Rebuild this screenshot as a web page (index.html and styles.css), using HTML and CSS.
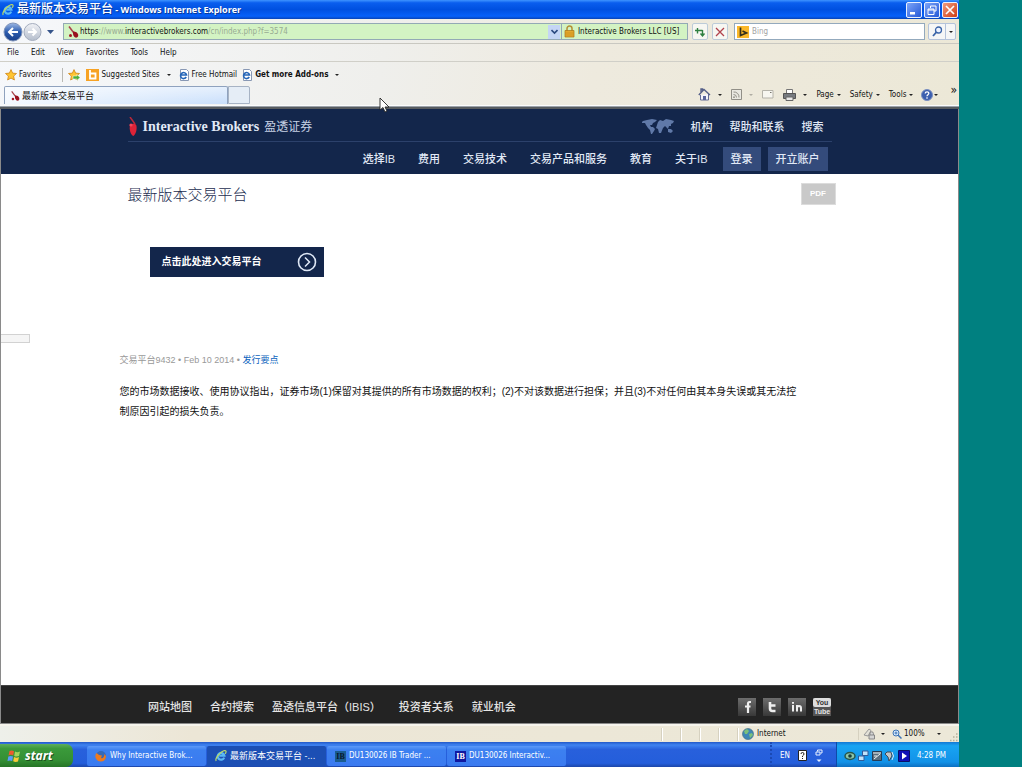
FILE: index.html
```html
<!DOCTYPE html>
<html lang="zh-CN">
<head>
<meta charset="utf-8">
<title>最新版本交易平台</title>
<link rel="stylesheet" href="styles.css">
</head>
<body>
<svg class="defs" aria-hidden="true">
  <defs>
    <linearGradient id="blueBall" x1="0" y1="0" x2="0" y2="1"><stop offset="0" stop-color="#9db9e6"/><stop offset=".5" stop-color="#2c5cae"/><stop offset="1" stop-color="#1a3f88"/></linearGradient>
    <linearGradient id="greyBall" x1="0" y1="0" x2="0" y2="1"><stop offset="0" stop-color="#f0f2f6"/><stop offset="1" stop-color="#b4bdcc"/></linearGradient>
    <linearGradient id="social" x1="0" y1="0" x2="0" y2="1"><stop offset="0" stop-color="#6d6d6d"/><stop offset="1" stop-color="#383838"/></linearGradient>
    <symbol id="ie" viewBox="0 0 12 12"><path d="M9.200 7.600A3.400 3.400 0 1 1 9.400 5.600H4.200" fill="none" stroke="#5ab8f4" stroke-width="2.200"/><path d="M1.200 11C-.6 8.200 7.500-.8 10.600.8c1 .8.2 2.200-.4 3" fill="none" stroke="#b9d86a" stroke-width="1.200"/></symbol>
    <symbol id="iepage" viewBox="0 0 12 12"><path d="M2.500 .5h6l2 2v9h-8z" fill="#fff" stroke="#8898b4"/><path d="M8.200 8A3 3 0 1 1 8.500 6H3" fill="none" stroke="#2465b8" stroke-width="1.600"/></symbol>
    <symbol id="ibmark" viewBox="0 0 12 12"><path d="M2 .5l4.500 6" stroke="#a8434a" stroke-width="1.500"/><path d="M6 5.500q4-.5 5 2.500t-2 3.800Q5.500 11 6 5.500z" fill="#99121f"/><circle cx="3.500" cy="9.500" r="1.500" fill="#a31824"/></symbol>
    <symbol id="star" viewBox="0 0 12 12"><path d="M6 .6l1.600 3.500 3.900.4-2.900 2.600.8 3.900L6 9.100 2.600 11l.8-3.900L.5 4.500l3.900-.4z" fill="#ffc531" stroke="#cf8416" stroke-width=".8"/></symbol>
  </defs>
</svg>
<div class="desktop">
  <div class="window">
    <header class="titlebar">
      <svg class="i12"><use href="#ie"/></svg>
      <h1><span class="cjk">最新版本交易平台</span> - Windows Internet Explorer</h1>
      <div class="winbtns">
        <button aria-label="Minimize"><svg viewBox="0 0 14 14"><path d="M3 9h5v2.500H3z" fill="#fff"/></svg></button>
        <button aria-label="Restore"><svg viewBox="0 0 14 14"><path d="M5.500 5V3h5.500v5H9M3 6h6v5.500H3zM3 7h6" fill="none" stroke="#fff"/></svg></button>
        <button class="close" aria-label="Close"><svg viewBox="0 0 14 14"><path d="M3 3l8 8m0-8l-8 8" stroke="#fff" stroke-width="1.700"/></svg></button>
      </div>
    </header>

    <div class="chrome">
      <div class="addressrow">
        <button class="plain" aria-label="Back"><svg width="20" height="20" viewBox="0 0 20 20"><circle cx="10" cy="10" r="9" fill="url(#blueBall)" stroke="#7f93b8"/><path d="M15 10H6m4-4l-4 4 4 4" fill="none" stroke="#fff" stroke-width="2"/></svg></button>
        <button class="plain" aria-label="Forward"><svg width="19" height="20" viewBox="0 0 19 20"><circle cx="9.500" cy="10" r="8.500" fill="url(#greyBall)" stroke="#a3acbd"/><path d="M5 10h8M9.500 6.500L13 10l-3.500 3.500" fill="none" stroke="#fff" stroke-width="2"/></svg></button>
        <button class="plain recent" aria-label="Recent pages"><svg width="8" height="6" viewBox="0 0 8 6"><path d="M0 1h7L3.500 5z" fill="#35548a"/></svg></button>
        <div class="address">
          <svg class="i12"><use href="#ibmark"/></svg>
          <div class="url" role="textbox" aria-label="Address"><b>https</b>://www.<b>interactivebrokers.com</b>/cn/index.php?f=3574</div>
          <button class="drop" aria-label="Show addresses"><svg width="7" height="6" viewBox="0 0 7 6"><path d="M.5 1l3 3 3-3" fill="none" stroke="#2c4a80" stroke-width="1.600"/></svg></button>
          <div class="security"><svg width="11" height="13" viewBox="0 0 11 13"><path d="M3 6V3.500a2.500 2.500 0 0 1 5 0V6" fill="none" stroke="#b39036" stroke-width="1.500"/><path d="M1 5.500h9V12H1z" fill="#e3a92c" stroke="#a97412" stroke-width=".7"/><path d="M1 8h9M1 10h9" stroke="#c98c1b" stroke-width=".7"/></svg>Interactive Brokers LLC [US]</div>
        </div>
        <button class="tool" aria-label="Refresh"><svg width="12" height="12" viewBox="0 0 12 12"><path d="M3.500 7.500V2M1 4.500h4.500M8.500 4v6M6.500 7.500l2 2.500 2-2.500M5.500 4.500h3" fill="none" stroke="#2f8042" stroke-width="1.400"/></svg></button>
        <button class="tool" aria-label="Stop"><svg width="10" height="10" viewBox="0 0 10 10"><path d="M1 1l8 8m0-8L1 9" stroke="#b2434c" stroke-width="1.300"/></svg></button>
        <label class="search"><svg width="12" height="12" viewBox="0 0 12 12"><path d="M0 0h12v12H0z" fill="#fbb829"/><path d="M3.500 1.500v8l6-2.500-4-2" fill="none" stroke="#35301c" stroke-width="1.700"/></svg><input type="text" placeholder="Bing" aria-label="Bing search"></label>
        <div class="go"><button aria-label="Search"><svg width="11" height="11" viewBox="0 0 11 11"><circle cx="6.500" cy="4" r="3" fill="#eef4ff" stroke="#3a64a8" stroke-width="1.300"/><path d="M4.500 6L1 10" stroke="#3a64a8" stroke-width="1.800"/></svg></button><button class="more" aria-label="Search options"><i class="arrow"></i></button></div>
      </div>

      <nav class="menubar"><button>File</button><button>Edit</button><button>View</button><button>Favorites</button><button>Tools</button><button>Help</button></nav>

      <div class="favbar">
        <button class="favs"><svg class="i12"><use href="#star"/></svg>Favorites</button>
        <button aria-label="Add to favorites"><svg width="12" height="12" viewBox="0 0 12 12"><use href="#star"/><path d="M5 7h4V5.500L12 8.500 9 11.500V10H5z" fill="#4fae38" stroke="#fff" stroke-width=".5"/></svg></button>
        <button class="suggested"><svg width="13" height="12" viewBox="0 0 13 12"><path d="M0 0h13v12H0z" fill="#f7a223"/><path d="M4 1v8.500h5.500v-5H4" fill="none" stroke="#fff" stroke-width="1.800"/></svg>Suggested Sites <i class="arrow"></i></button>
        <button class="hotmail"><svg class="i12"><use href="#iepage"/></svg>Free Hotmail</button>
        <button class="strong"><svg class="i12"><use href="#iepage"/></svg>Get more Add-ons <i class="arrow"></i></button>
      </div>

      <div class="tabrow">
        <button class="tab"><svg class="i10"><use href="#ibmark"/></svg>最新版本交易平台</button>
        <button class="newtab" aria-label="New tab"></button>
        <div class="commands">
          <button class="wide" aria-label="Home"><svg width="13" height="13" viewBox="0 0 13 13"><path d="M2.500 7v5h8V6" fill="#f3f3fb" stroke="#626b94"/><path d="M.8 7L6 1.500 12 7M3 4V1h1.500v1.500" fill="none" stroke="#555f88" stroke-width="1.400"/><path d="M5 8h3v4H5z" fill="#59649a"/></svg><i class="arrow"></i></button>
          <button class="wide dim" aria-label="Feeds"><svg width="11" height="11" viewBox="0 0 11 11"><path d="M.5.500h10v10H.5z" fill="#e9e8e1" stroke="#918f87"/><path d="M2.500 3a5 5 0 0 1 5.500 5.500M2.500 5.500a3 3 0 0 1 3 3" fill="none" stroke="#918f87"/><circle cx="3" cy="8.200" r=".9" fill="#918f87"/></svg><i class="arrow"></i></button>
          <button aria-label="Read mail"><svg width="12" height="9" viewBox="0 0 12 9"><path d="M.5.500h10.500v7.500H.5z" fill="#f7f6f0" stroke="#b5b3aa"/><path d="M8 2.500h1.500" stroke="#77756e"/></svg></button>
          <button class="wide" aria-label="Print"><svg width="13" height="12" viewBox="0 0 13 12"><path d="M3.500 4V.5h6V4" fill="#fff" stroke="#777"/><path d="M.5 4.500h12v5H.5z" fill="#777b80" stroke="#555"/><path d="M3 8h7v3.500H3z" fill="#e9e9e9" stroke="#666"/></svg><i class="arrow"></i></button>
          <button>Page <i class="arrow"></i></button>
          <button>Safety <i class="arrow"></i></button>
          <button>Tools <i class="arrow"></i></button>
          <button class="help" aria-label="Help"><svg width="12" height="12" viewBox="0 0 12 12"><circle cx="6" cy="6" r="5.500" fill="#3c5fae" stroke="#7b8fc0"/><path d="M4.200 4.500C4.300 2.300 8 2.500 7.800 4.500 7.700 5.700 6 5.700 6 7.200M6 8.300v1.400" fill="none" stroke="#fff" stroke-width="1.300"/></svg><i class="arrow"></i></button>
        </div>
        <button class="chev" aria-label="More commands">»</button>
      </div>
    </div>

    <main class="page">
      <div class="masthead">
        <div class="wrap">
          <div class="brandrow">
            <a class="brand" href="#"><svg width="10" height="20" viewBox="0 0 10 20"><path d="M2 0l5 7" stroke="#b9283a" stroke-width="1.500"/><path d="M2 8.500C4 6 8 6 8.500 9c.5 3-.5 8-3 10C2.500 18 1 12 2 8.500z" fill="#dd2338"/><circle cx="3" cy="8" r="1.600" fill="#f0485a"/></svg><span class="name">Interactive Brokers</span><span class="cn">盈透证券</span></a>
            <nav class="toplinks">
              <a href="#" aria-label="Region"><svg width="32" height="16" viewBox="0 0 32 16"><path d="M1 2l4-1 5-1 5 1-2 2-2 1-1 2-2 0 1 2 2 0 2 2-1 2-2 3-1 0-1-4-2-2-2-3-1-2-4 0zM16 3l2-2 3 1 3-2 5 1 3 1-1 2-2 1 0 2-2 0-1 3-2-2-1-1-2 2-2 5-2 0-1-4-2-1 1-3zM26 10l3 0 2 2-2 2-3-1z" fill="#6079a8"/></svg></a>
              <a href="#">机构</a><a href="#">帮助和联系</a><a href="#">搜索</a>
            </nav>
          </div>
          <nav class="mainlinks">
            <a href="#">选择IB</a><a href="#">费用</a><a href="#">交易技术</a><a href="#">交易产品和服务</a><a href="#">教育</a><a href="#">关于IB</a>
            <span class="account"><a href="#">登录</a><a href="#">开立账户</a></span>
          </nav>
        </div>
      </div>

      <div class="content">
        <div class="titlerow"><h2>最新版本交易平台</h2><button class="pdf">PDF</button></div>
        <a class="launch" href="#">点击此处进入交易平台<svg width="20" height="20" viewBox="0 0 20 20"><circle cx="10" cy="10" r="8.500" fill="none" stroke="#dfe8f6" stroke-width="1.600"/><path d="M8 5.500l4.500 4.500L8 14.500" fill="none" stroke="#dfe8f6" stroke-width="1.500"/></svg></a>
        <p class="meta">交易平台9432 • Feb 10 2014 • <a href="#">发行要点</a></p>
        <p class="notice">您的市场数据接收、使用协议指出，证券市场(1)保留对其提供的所有市场数据的权利；(2)不对该数据进行担保；并且(3)不对任何由其本身失误或其无法控<br>制原因引起的损失负责。</p>
      </div>
      <div class="sidetab"></div>

      <footer class="foot">
        <nav><a href="#">网站地图</a><a href="#">合约搜索</a><a href="#">盈透信息平台（IBIS）</a><a href="#">投资者关系</a><a href="#">就业机会</a></nav>
        <div class="social">
          <a href="#" aria-label="Facebook"><svg viewBox="0 0 18 18"><path d="M0 0h18v18H0z" fill="url(#social)"/><path d="M13 4h-1.500Q10 4 10 6v9M7 8.500h5.500" fill="none" stroke="#eee" stroke-width="2.200"/></svg></a>
          <a href="#" aria-label="Twitter"><svg viewBox="0 0 18 18"><path d="M0 0h18v18H0z" fill="url(#social)"/><path d="M7 4v6.500Q7 13 9.500 13h3M7 7.500h5.500" fill="none" stroke="#eee" stroke-width="2.600"/></svg></a>
          <a href="#" aria-label="LinkedIn"><svg viewBox="0 0 18 18"><path d="M0 0h18v18H0z" fill="url(#social)"/><path d="M5 7v6.500M5 4v1.700M9 13.500V7M9 10Q9 8 11 8t2 2v3.500" fill="none" stroke="#eee" stroke-width="2"/></svg></a>
          <a class="yt" href="#"><span>You</span><span>Tube</span></a>
        </div>
      </footer>
    </main>

    <div class="status">
      <span class="cells"><i></i><i></i><i></i><i></i><i></i></span>
      <span class="zone"><svg width="12" height="12" viewBox="0 0 12 12"><circle cx="6" cy="6" r="5.500" fill="#3d86b5" stroke="#4a7286" stroke-width=".7"/><path d="M2 3l3-2 2 2-2 3-2 0zM7 6l3-1 1 2-3 3z" fill="#7cc07a"/></svg>Internet</span>
      <button class="protect" aria-label="Protected mode"><svg width="13" height="12" viewBox="0 0 13 12"><path d="M1 7L6 1l2 1.500L5 8z" fill="#e3e1d8" stroke="#999"/><path d="M6 7h5.500v4H6zM7 7V5.500a1.700 1.700 0 0 1 3.400 0V7" fill="#d5d5d5" stroke="#888"/></svg><i class="arrow"></i></button>
      <button class="zoom"><svg width="10" height="10" viewBox="0 0 10 10"><circle cx="4" cy="4" r="3" fill="#d9ecff" stroke="#3e74b5"/><path d="M4 2.500v3M2.500 4h3" stroke="#3e74b5"/><path d="M6 6l3.500 3.500" stroke="#3e74b5" stroke-width="1.500"/></svg>100% <i class="arrow"></i></button>
      <svg class="grip" width="9" height="9" viewBox="0 0 9 9"><path d="M7 1h1.500M4 4h1.500M7 4h1.500M1 7.500h1.500M4 7.500h1.500M7 7.500h1.500" stroke="#b5b09a" stroke-width="1.500"/></svg>
    </div>

    <div class="taskbar">
      <button class="start"><svg width="14" height="14" viewBox="0 0 14 14"><path d="M2.500 2Q5 .8 7 2.200L6.200 6.500Q4 5.300 1.500 6.400z" fill="#ee5a2e"/><path d="M8 2.600q2.300 1.200 5 0L12 7q-2.500 1-4.800-.1z" fill="#a4d45c"/><path d="M1.300 7.500Q4 6.400 6 7.600L5.200 12Q3 10.800.5 12z" fill="#5a9bfa"/><path d="M7 8q2.500 1.200 5 .1L11 12.500q-2.500 1-4.800-.2z" fill="#f9cb3a"/></svg>start</button>
      <div class="tasks">
        <button><svg width="12" height="12" viewBox="0 0 12 12"><circle cx="6" cy="6" r="5" fill="#3569b8"/><path d="M6 11.500A5.300 5.300 0 0 1 1.500 3L4 5l3 .5L6 8q3 1 3.500-4 1.500 1 1.500 3-1 4.500-5 4.500z" fill="#ec7a20"/></svg>Why Interactive Brok...</button>
        <button class="active"><svg class="i12"><use href="#ie"/></svg><span class="zh">最新版本交易平台 -...</span></button>
        <button><b class="ib teal">IB</b>DU130026 IB Trader ...</button>
        <button><b class="ib">IB</b>DU130026 Interactiv...</button>
      </div>
      <div class="lang"><span>EN</span><svg width="9" height="11" viewBox="0 0 9 11"><path d="M.5.500h8v10h-8z" fill="#fff" stroke="#222"/><path d="M3 4Q3 2.500 4.500 2.500T6 4Q6 5 4.500 6v1M4.500 8v1" fill="none" stroke="#222"/></svg><svg width="8" height="14" viewBox="0 0 8 14"><path d="M2.500 2.500V1H7v3H5.500M1 3h4v3H1z" fill="none" stroke="#e6f0ff"/><path d="M1.500 10.500h5L4 13z" fill="#e6f0ff"/></svg></div>
      <div class="tray">
        <svg width="66" height="14" viewBox="0 0 66 14"><ellipse cx="6" cy="7" rx="5" ry="3.500" fill="#8dc5a8" stroke="#28564b" stroke-width="1.500"/><circle cx="6" cy="7" r="1.800" fill="#173c39"/><path d="M18.500 2h5.500v4.500h-5.500zM14.500 7h5.500v4.500h-5.500z" fill="#bfe3fa" stroke="#315a97"/><path d="M28.500 2.500h9v9h-9z" fill="#5a6f80" stroke="#263c55"/><path d="M29 4h8M30 10l6-5M30 7h3" stroke="#eef4f4"/><path d="M41 5l2-2 4 0 1 4-3 5-1-4z" fill="#bfc4c8" stroke="#3e4a58"/><path d="M48 3q3 4 0 8" fill="none" stroke="#dceaf8"/><path d="M54.500 1.500h11v11h-11z" fill="#1010b8" stroke="#091068"/><path d="M58 3.500l5 3.500-5 3.500z" fill="#fff"/></svg>
        <span>4:28 PM</span>
      </div>
    </div>
  </div>
  <svg class="cursor" width="11" height="17" viewBox="0 0 11 17"><path d="M1 1v12l3-2.500L6 15l2-1-2-4h4z" fill="#fff" stroke="#222" stroke-width=".9"/></svg>
</div>
</body>
</html>
```
FILE: styles.css
```css
* { box-sizing: border-box; }
body {
  margin: 0;
  background: #fff;
  font: 8px/12px "DejaVu Sans Condensed", "Liberation Sans", "Noto Sans CJK SC", sans-serif;
  color: #111;
}
button, input { font: inherit; color: inherit; border: 0; padding: 0; margin: 0; background: none; }
button { display: flex; align-items: center; white-space: nowrap; }
a { color: inherit; text-decoration: none; }
svg { display: block; flex: none; }
.defs { position: absolute; width: 0; height: 0; }
.i12 { width: 12px; height: 12px; }
.i10 { width: 10px; height: 10px; }
.arrow { display: inline-block; border: 2px solid transparent; border-top-color: #222; border-bottom: 0; margin-left: 5px; }

.desktop {
  position: relative;
  min-height: calc(100vh - 1px);
  margin: 0 2px 1px 0;
  padding-right: 63px;
  background: #008080;
  display: flex;
}
.window { flex: 1; min-width: 0; display: flex; flex-direction: column; background: #ece9d8; }

.titlebar {
  height: 19px;
  display: flex;
  align-items: center;
  gap: 3px;
  padding: 0 1px 0 2px;
  background: linear-gradient(#3f94ff, #0a5eee 15%, #0050e0 50%, #0661fa 85%, #0843b8);
  color: #fff;
}
.titlebar h1 { flex: 1; margin: 0; font: bold 9px/16px "Open Sans", "Noto Sans CJK SC", sans-serif; text-shadow: 1px 1px #0a3a9a; }
.titlebar .cjk { font-size: 12px; font-weight: 500; }
.winbtns { display: flex; gap: 2px; }
.winbtns button { width: 16px; height: 16px; border: 1px solid #e8f0ff; border-radius: 2px; background: linear-gradient(135deg, #7ca4f8, #2559d8); }
.winbtns .close { background: linear-gradient(135deg, #f09a7e, #d13d14); }
.winbtns svg { width: 14px; height: 14px; }

.chrome { background: linear-gradient(100deg, #f6f8fb, #efefec 40%, #eeeade 62%, #ece8d7); border-bottom: 2px solid #585c60; }
.addressrow { height: 25px; display: flex; align-items: center; padding: 1px 3px 0; border-bottom: 1px solid #c9c8c1; }
.plain.recent { margin: 0 8px 0 5px; }
.address { flex: 1; height: 17px; display: flex; align-items: center; border: 1px solid #93a9b5; background: #d3f3c3; padding-left: 3px; }
.url { flex: 1; margin-left: 1px; color: #98ab92; white-space: nowrap; }
.url b { font-weight: normal; color: #111; }
.drop { width: 12px; height: 14px; justify-content: center; background: #c4d5f5; }
.security { height: 100%; width: 126px; display: flex; align-items: center; gap: 3px; padding-left: 2px; margin-left: 1px; border-left: 1px solid #93a9b5; white-space: nowrap; }
.tool { width: 16px; height: 17px; justify-content: center; border: 1px solid #bccbd8; border-radius: 2px; background: #f7f7f2; margin-left: 4px; }
.search { width: 191px; height: 17px; display: flex; align-items: center; gap: 3px; margin: 0 3px 0 6px; padding-left: 2px; border: 1px solid #93a9bd; background: #fff; }
.search input { flex: 1; min-width: 0; outline: 0; }
.search input::placeholder { color: #a3a3a3; }
.go { height: 17px; display: flex; border: 1px solid #b4c3da; border-radius: 2px; background: #f5f6f6; }
.go button { width: 16px; justify-content: center; }
.go .more { width: 10px; border-left: 1px solid #b4c3da; }
.go .arrow { margin: 0; }

.menubar { height: 18px; display: flex; gap: 12px; padding: 1px 0 0 7px; border-bottom: 1px solid #d0cfc8; }
.favbar { height: 24px; display: flex; align-items: center; padding: 1px 0 0 5px; }
.favbar button { gap: 2px; height: 14px; }
.favbar .favs { padding-right: 11px; margin-right: 5px; border-right: 1px solid #b9b9b4; }
.favbar .suggested { margin-left: 6px; }
.favbar .hotmail { margin-left: 7px; }
.favbar .strong { font-weight: bold; margin-left: 4px; }
.tabrow { height: 21px; display: flex; align-items: flex-end; padding: 0 2px 2px 4px; border-bottom: 1px solid #9ca3ab; background: linear-gradient(transparent 19px, #fbfbfb 19px); }
.tab { width: 224px; height: 18px; gap: 2px; padding-left: 5px; border: 1px solid #8fa2be; border-bottom: 0; border-radius: 2px 2px 0 0; background: linear-gradient(#fff8, #fff0), linear-gradient(90deg, #f4f9ff, #c9dffb); font-size: 9px; }
.newtab { width: 22px; height: 18px; border: 1px solid #a7b3c4; border-radius: 0 2px 0 0; background: #e5edf6; }
.commands { flex: 1; display: flex; justify-content: flex-end; align-items: center; gap: 9px; height: 19px; }
.commands .dim .arrow { opacity: .3; }
.commands .arrow { margin-left: 3px; }
.commands .wide .arrow { margin-left: 7px; }
.commands .help { margin-left: -1px; }
.commands .help .arrow { margin-left: 1px; }
.chev { font-size: 12px; height: 28px; margin-left: 12px; }

.page { position: relative; flex: 1; display: flex; flex-direction: column; background: #fff; border: solid #8a8a8a; border-width: 0 1px 1px 1px; font-family: "Liberation Sans", "Noto Sans CJK SC", sans-serif; }
.masthead { background: #13264b; color: #e1e9f6; font-size: 11px; font-weight: 500; }
.wrap { max-width: 704px; margin: 0 auto; }
.brandrow { height: 33px; display: flex; justify-content: space-between; align-items: center; padding: 3px 8px 0 0; border-bottom: 1px solid #2c416b; }
.brand { display: flex; align-items: center; gap: 5px; }
.brand .name { font: bold 14px/18px "Liberation Serif", serif; }
.brand .cn { font-size: 12px; font-weight: 400; color: #c5d0e4; }
.toplinks { display: flex; align-items: center; gap: 17px; }
.mainlinks { height: 32px; display: flex; justify-content: flex-end; align-items: center; gap: 23px; padding: 1px 4px 0 0; white-space: nowrap; }
.account { display: flex; gap: 7px; margin-left: -8px; }
.account a { padding: 0 8px; line-height: 24px; background: #344b7b; }

.content { flex: 1; width: 100%; max-width: 720px; margin: 0 auto; }
.titlerow { display: flex; justify-content: space-between; align-items: flex-start; padding: 9px 4px 0 8px; }
.titlerow h2 { margin: 0; font-size: 15px; line-height: 24px; font-weight: 300; color: #1c2d50; }
.pdf { width: 35px; height: 22px; justify-content: center; background: #c9c9c9; color: #fff; font-weight: bold; border: 1px solid #dcdcdc; }
.launch { display: flex; justify-content: space-between; align-items: center; width: 174px; height: 30px; margin: 40px 0 0 30px; padding: 0 7px 0 12px; background: #13264b; color: #fff; font-size: 10px; font-weight: 700; white-space: nowrap; }
.meta { margin: 76px 0 0; font-size: 9px; line-height: 14px; color: #999; }
.meta a { color: #0a62bd; }
.notice { margin: 15px 0 0; font-size: 10px; line-height: 20px; color: #111; }
.sidetab { position: absolute; left: 0; top: 225px; width: 29px; height: 9px; border: 1px solid #d2d2d2; border-left: 0; background: #f5f5f5; }

.foot { height: 38px; display: flex; justify-content: space-between; align-items: center; padding: 5px 127px 0 147px; background: #232323; color: #e5e5e5; font-size: 11px; font-weight: 500; border-top: 1px solid #444; white-space: nowrap; }
.foot nav { display: flex; gap: 18px; }
.social { display: flex; gap: 7px; }
.social a, .social svg { width: 18px; height: 18px; }
.social .yt { display: flex; flex-direction: column; background: #555; font: bold 7px/9px "Liberation Sans", sans-serif; text-align: center; }
.yt span:first-child { background: #ddd; color: #333; border-radius: 2px; }

.status { height: 18px; display: flex; align-items: center; padding: 0 1px; border-top: 2px solid #f6f4ec; background: linear-gradient(90deg, #eef0ea, #ece6d6 20%, #ece8d8); }
.cells { flex: 1; display: flex; justify-content: flex-end; gap: 17px; }
.cells i { height: 13px; border-left: 1px solid #d6d1c0; border-right: 1px solid #fff; }
.zone { display: flex; align-items: center; gap: 3px; width: 119px; padding-left: 3px; }
.protect { width: 34px; padding-left: 4px; border-left: 1px solid #d6d1c0; }
.zoom { gap: 2px; width: 57px; }
.zoom .arrow { margin-left: 10px; }
.grip { align-self: flex-end; }

.taskbar { height: 25px; display: flex; align-items: stretch; background: linear-gradient(#2258c8, #3f83f0 12%, #2860dc 30%, #245edb 85%, #1c46a8); color: #fff; }
.start { width: 73px; gap: 4px; padding-left: 7px; margin-top: 2px; border-radius: 0 7px 7px 0; background: linear-gradient(#5fae5c, #3b9a3b 20%, #348f34 70%, #267526); font: italic bold 12px/18px "Open Sans", sans-serif; text-shadow: 1px 1px #1c4f1c; }
.tasks { flex: 1; display: flex; gap: 1px; padding: 4px 0 1px 14px; }
.tasks button { flex: 0 1 119px; gap: 3px; padding-left: 8px; border-radius: 2px; background: linear-gradient(#5c99f8, #3c80f0 20%, #3a7af0); overflow: hidden; }
.tasks .active { background: #1c4fb4; }
.tasks .zh { font-size: 9px; }
.ib { width: 11px; background: #1018a0; color: #fff; font: bold 8px/11px "Liberation Serif", serif; text-align: center; }
.ib.teal { background: #1a5c90; color: #08182c; }
.lang { display: flex; align-items: center; gap: 8px; padding: 2px 13px 0 8px; border-left: 2px dotted #1a49b4; }
.tray { width: 123px; display: flex; align-items: center; gap: 7px; padding: 2px 0 0 7px; background: linear-gradient(#1378d4, #18a4f2 15%, #1292e8 80%, #0d6fc0); border-left: 1px solid #0f4aa8; }
.cursor { position: absolute; left: 379px; top: 97px; }
```
